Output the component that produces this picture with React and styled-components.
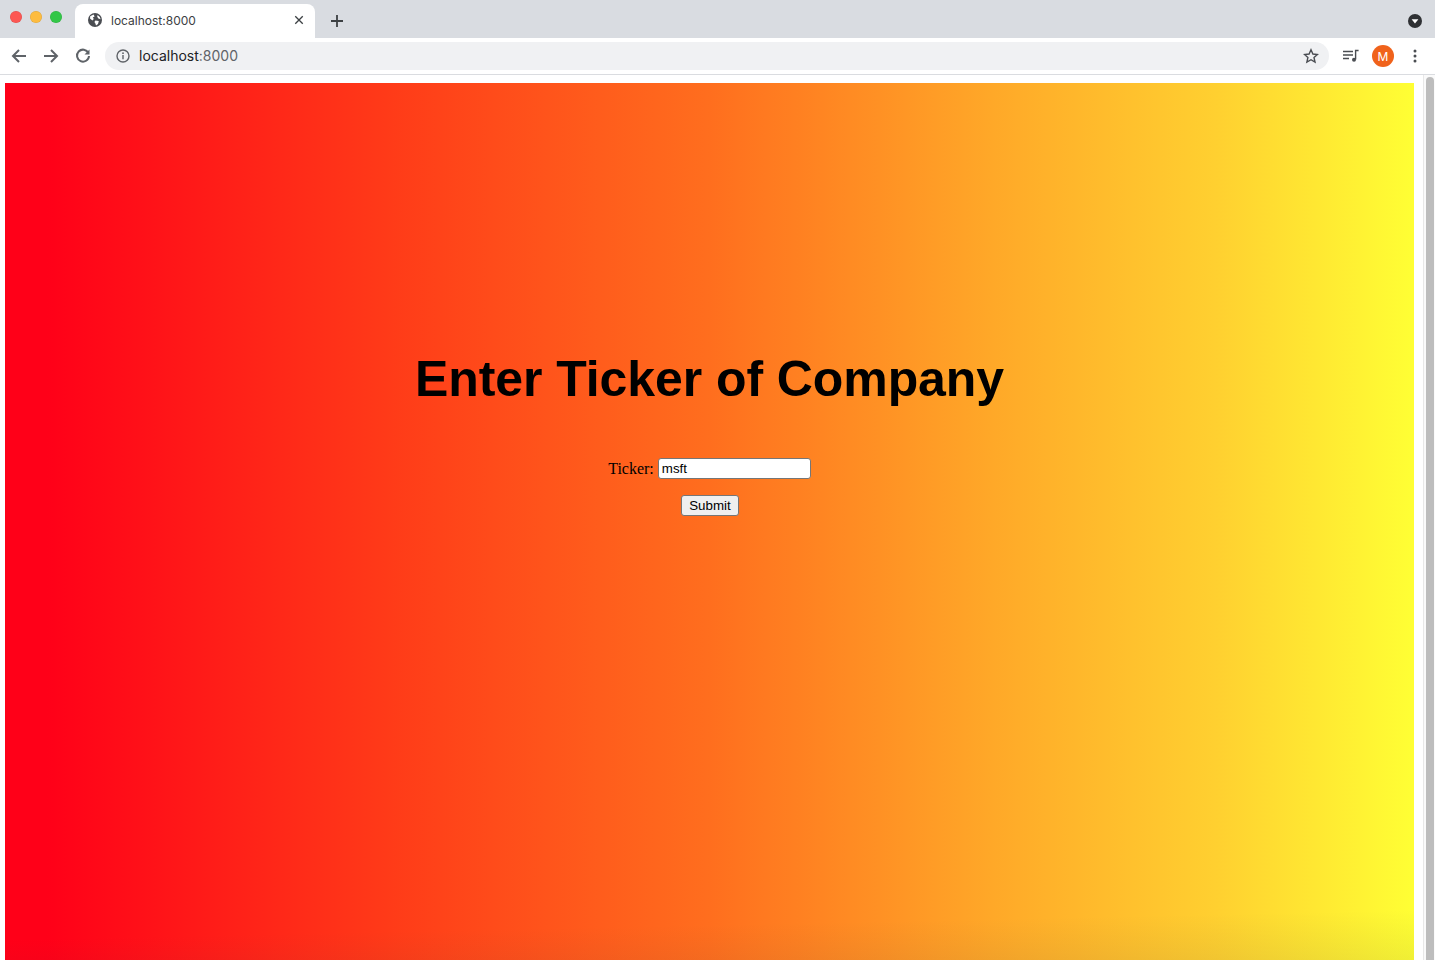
import React from 'react';
import styled, { createGlobalStyle } from 'styled-components';

const GlobalStyle = createGlobalStyle`
  html, body {
    margin: 0;
    padding: 0;
    height: 100%;
    overflow: hidden;
    background: #fff;
  }
`;

const Window = styled.div`
  display: flex;
  flex-direction: column;
  height: 960px;
  overflow: hidden;
  font-family: 'Inter', 'Liberation Sans', sans-serif;
`;

const TabStrip = styled.div`
  display: flex;
  align-items: flex-end;
  height: 38px;
  flex: none;
  background: #d9dce1;
  padding-left: 10px;
`;

const Lights = styled.div`
  display: flex;
  gap: 8px;
  align-self: flex-start;
  margin-top: 11px;
  width: 65px;
`;

const Light = styled.span`
  width: 12px;
  height: 12px;
  border-radius: 50%;
  background: ${(p) => p.$color};
  box-shadow: inset 0 0 0 0.5px rgba(0, 0, 0, 0.12);
`;

const Tab = styled.div`
  display: flex;
  align-items: center;
  width: 240px;
  height: 34px;
  box-sizing: border-box;
  padding: 0 10px 2px 13px;
  background: #fff;
  border-radius: 8px 8px 0 0;
  font-size: 12px;
  color: #3c4043;
`;

const TabTitle = styled.span`
  flex: 1;
  margin-left: 9px;
`;

const NewTab = styled.div`
  display: flex;
  margin: 0 0 9px 14px;
`;

const StripEnd = styled.div`
  display: flex;
  margin: 0 13px 10px auto;
`;

const Toolbar = styled.div`
  display: flex;
  align-items: center;
  height: 37px;
  flex: none;
  box-sizing: border-box;
  padding: 0 0 0 11px;
  background: #fff;
  border-bottom: 1px solid #dadce0;
`;

const NavIcons = styled.div`
  display: flex;
  gap: 16px;
  width: 94px;
`;

const Omnibox = styled.div`
  display: flex;
  align-items: center;
  width: 1224px;
  height: 28px;
  box-sizing: border-box;
  padding: 0 10px 0 11px;
  background: #f0f1f3;
  border-radius: 14px;
  font-size: 14px;
  color: #202124;
`;

const Url = styled.span`
  flex: 1;
  margin-left: 9px;
  padding-bottom: 1px;
  span {
    color: #5f6368;
  }
`;

const ToolIcons = styled.div`
  display: flex;
  align-items: center;
  margin-left: 14px;
`;

const Avatar = styled.div`
  display: flex;
  align-items: center;
  justify-content: center;
  width: 22px;
  height: 22px;
  margin: 0 19px 0 13px;
  border-radius: 50%;
  background: #f0621b;
  color: #fff;
  font-size: 12px;
`;

const PageArea = styled.div`
  display: flex;
  flex: 1;
  min-height: 0;
`;

const Viewport = styled.div`
  flex: 1;
  min-width: 0;
  padding: 8px 9px 0 5px;
`;

const Hero = styled.main`
  display: flex;
  flex-direction: column;
  align-items: center;
  height: 100%;
  padding-top: 265px;
  box-sizing: border-box;
  background:
    linear-gradient(178.8deg, rgba(60, 60, 60, 0) 856px, rgba(60, 60, 60, 0.08) 906px),
    linear-gradient(to right, #ff0018 3%, #ff3a18 27%, #ff6e1e 50%, #ffa828 70%, #ffd030 86%, #ffff34 100%);
`;

const Title = styled.h1`
  margin: 0;
  font-family: 'Liberation Sans', Arial, sans-serif;
  font-size: 50px;
  font-weight: 700;
  line-height: 62px;
  letter-spacing: -0.08px;
  color: #000;
`;

const Form = styled.form`
  display: flex;
  flex-direction: column;
  align-items: center;
  margin-top: 48px;
`;

const Field = styled.label`
  display: flex;
  align-items: center;
  gap: 4px;
  font-family: 'Liberation Serif', 'Times New Roman', serif;
  font-size: 16px;
  color: #000;
`;

const TickerInput = styled.input`
  width: 153px;
  height: 21px;
  box-sizing: border-box;
  padding: 1px 3px;
  background: #fff;
  border: 1px solid #767676;
  border-radius: 3px;
  font-family: 'Liberation Sans', Arial, sans-serif;
  font-size: 13.33px;
  color: #000;
  outline: none;
`;

const SubmitButton = styled.button`
  width: 58px;
  height: 21px;
  margin: 16px 0 0 1px;
  padding: 0;
  background: #efefef;
  border: 1px solid #767676;
  border-radius: 3px;
  font-family: 'Liberation Sans', Arial, sans-serif;
  font-size: 13.33px;
  color: #000;
`;

const Scrollbar = styled.div`
  flex: none;
  width: 12px;
  padding: 2px 1px 0 2px;
  box-sizing: border-box;
  background: #fafafa;
  border-left: 1px solid #e8e8e8;
`;

const ScrollThumb = styled.div`
  height: 100%;
  border-radius: 4px 4px 0 0;
  background: #bdbdbd;
`;

const Stroke = ({ size = 16, width = 2, color = '#5f6368', children }) => (
  <svg
    width={size}
    height={size}
    viewBox="0 0 16 16"
    fill="none"
    stroke={color}
    strokeWidth={width}
    strokeLinecap="butt"
    strokeLinejoin="miter"
  >
    {children}
  </svg>
);

const Globe = () => (
  <svg width="14" height="14" viewBox="0 0 14 14">
    <circle cx="7" cy="7" r="7" fill="#4a4d52" />
    <path d="M2.2 3.2 5.6 1.6 6.6 3.4 4.8 4.4 5.8 6 4.4 7.4 2 5.6ZM7.4 7.4 10.8 8 10 11 8 12.6 7.4 10.4 6.4 9ZM9.6 2 11.8 4 12.6 6.2 10.4 5.6 9.2 3.8Z" fill="#fff" />
  </svg>
);

export default function App() {
  return (
    <Window>
      <GlobalStyle />
      <TabStrip>
        <Lights>
          <Light $color="#fc5753" />
          <Light $color="#fdbc40" />
          <Light $color="#33c748" />
        </Lights>
        <Tab>
          <Globe />
          <TabTitle>localhost:8000</TabTitle>
          <Stroke size={12} width={1.8} color="#3c4043">
            <path d="M3 3l10 10M13 3 3 13" />
          </Stroke>
        </Tab>
        <NewTab>
          <Stroke size={16} width={1.8} color="#3c4043">
            <path d="M8 2v12M2 8h12" />
          </Stroke>
        </NewTab>
        <StripEnd>
          <svg width="14" height="14" viewBox="0 0 14 14">
            <circle cx="7" cy="7" r="7" fill="#2f3134" />
            <path d="M3.6 5.2h6.8L7 9.6Z" fill="#fff" />
          </svg>
        </StripEnd>
      </TabStrip>
      <Toolbar>
        <NavIcons>
          <Stroke>
            <path d="M15 8H2M8 2 2 8l6 6" />
          </Stroke>
          <Stroke>
            <path d="M1 8h13M8 2l6 6-6 6" />
          </Stroke>
          <Stroke>
            <path d="M13.4 5A6 6 0 1 0 14 8" />
            <path d="M14.5 1.5v5h-5" fill="#5f6368" stroke="none" />
          </Stroke>
        </NavIcons>
        <Omnibox>
          <svg width="14" height="14" viewBox="0 0 14 14" fill="none">
            <circle cx="7" cy="7" r="6" stroke="#5f6368" strokeWidth="1.4" />
            <path d="M7 6v4.2" stroke="#5f6368" strokeWidth="1.4" />
            <circle cx="7" cy="4.2" r="0.9" fill="#5f6368" />
          </svg>
          <Url>
            localhost<span>:8000</span>
          </Url>
          <Stroke size={16} width={1.4} color="#4a4d52">
            <path d="M8 1.8 9.9 6l4.5.5-3.4 3 1 4.5L8 11.7 3.9 14l1-4.5-3.4-3L6.100 6Z" />
          </Stroke>
        </Omnibox>
        <ToolIcons>
          <svg width="16" height="14" viewBox="0 0 16 14" fill="none" stroke="#4a4d52" strokeWidth="1.4">
            <path d="M0 2.500h10M0 6h10M0 9.500h6M12.600 10.500V1.500h3" />
            <circle cx="11" cy="10.800" r="2" fill="#4a4d52" stroke="none" />
          </svg>
          <Avatar>M</Avatar>
          <svg width="4" height="14" viewBox="0 0 4 14" fill="#4a4d52">
            <circle cx="2" cy="2" r="1.500" />
            <circle cx="2" cy="7" r="1.500" />
            <circle cx="2" cy="12" r="1.500" />
          </svg>
        </ToolIcons>
      </Toolbar>
      <PageArea>
        <Viewport>
          <Hero>
            <Title>Enter Ticker of Company</Title>
            <Form onSubmit={(e) => e.preventDefault()}>
              <Field>
                Ticker:
                <TickerInput defaultValue="msft" />
              </Field>
              <SubmitButton type="submit">Submit</SubmitButton>
            </Form>
          </Hero>
        </Viewport>
        <Scrollbar>
          <ScrollThumb />
        </Scrollbar>
      </PageArea>
    </Window>
  );
}
